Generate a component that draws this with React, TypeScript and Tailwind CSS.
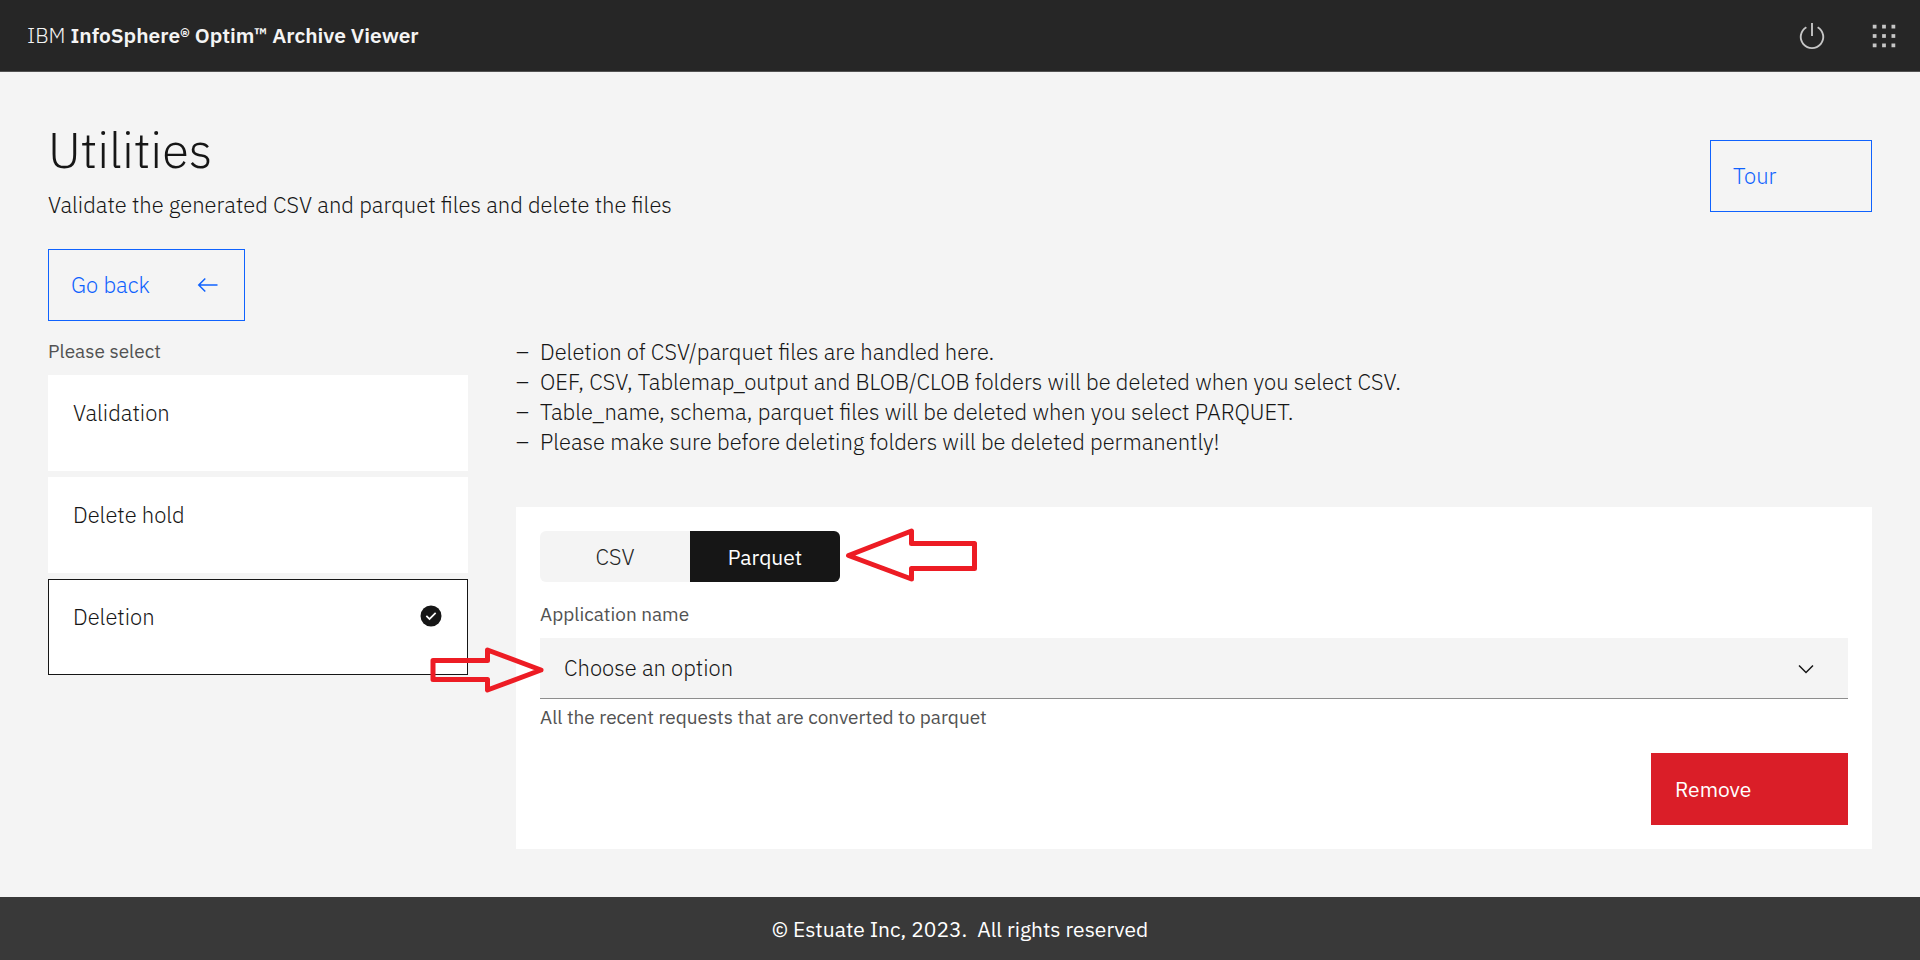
import React, { useState } from "react";

const notes = [
  "Deletion of CSV/parquet files are handled here.",
  "OEF, CSV, Tablemap_output and BLOB/CLOB folders will be deleted when you select CSV.",
  "Table_name, schema, parquet files will be deleted when you select PARQUET.",
  "Please make sure before deleting folders will be deleted permanently!",
];

const actions = ["Validation", "Delete hold", "Deletion"];
const formats = ["CSV", "Parquet"];

function PowerIcon() {
  return (
    <svg viewBox="0 0 32 32" className="size-[30px]" fill="currentColor" aria-hidden="true">
      <path d="M22.5 5.74l-1 1.73a11 11 0 1 1-11 0l-1-1.73a13 13 0 1 0 13 0Z" />
      <path d="M15 2h2v14h-2z" />
    </svg>
  );
}

function AppsIcon() {
  const stops = [4, 14, 24];
  return (
    <svg viewBox="0 0 32 32" className="size-[30px]" fill="currentColor" aria-hidden="true">
      {stops.map((y) => stops.map((x) => <rect key={`${x}-${y}`} x={x} y={y} width="4" height="4" />))}
    </svg>
  );
}

function BackArrowIcon() {
  return (
    <svg viewBox="0 0 16 16" className="size-6 shrink-0" fill="currentColor" aria-hidden="true">
      <path d="M6.500 12.700l.7-.7L3.700 8.500H15v-1H3.700L7.200 4l-.7-.7L1.800 8Z" />
    </svg>
  );
}

function CheckIcon() {
  return (
    <svg viewBox="0 0 32 32" className="size-6 shrink-0" aria-hidden="true">
      <circle cx="16" cy="16" r="14" fill="#161616" />
      <path d="M14 21.5l-5-4.96L10.59 15 14 18.35 21.41 11 23 12.58Z" fill="#fff" />
    </svg>
  );
}

function ChevronIcon() {
  return (
    <svg viewBox="0 0 16 16" className="pointer-events-none absolute top-1/2 right-[30px] size-6 -translate-y-1/2" fill="currentColor" aria-hidden="true">
      <path d="M8 11L3 6l.7-.7L8 9.6l4.3-4.3.7.7Z" />
    </svg>
  );
}

export default function App() {
  const [action, setAction] = useState("Deletion");
  const [format, setFormat] = useState("Parquet");

  return (
    <div className="flex min-h-screen flex-col bg-[#f4f4f4] font-['IBM_Plex_Sans','Noto_Sans',sans-serif] text-[22px] leading-[30px] font-light text-[#161616]">
      <header className="flex h-[72px] items-center justify-between border-b border-[#525252] bg-[#262626] pr-[21px] pl-[27px] text-[#f4f4f4]">
        <p className="pb-0.5 text-[21px]">
          IBM <span className="font-semibold">InfoSphere® Optim™ Archive Viewer</span>
        </p>
        <div className="flex gap-[42px] text-[#c6c6c6]">
          <button type="button" aria-label="Log out">
            <PowerIcon />
          </button>
          <button type="button" aria-label="App switcher">
            <AppsIcon />
          </button>
        </div>
      </header>

      <main className="flex-1 px-12 pt-12 pb-12">
        <div className="flex items-start justify-between">
          <div>
            <h1 className="text-[49px] leading-[60px]">Utilities</h1>
            <p className="mt-2.5">Validate the generated CSV and parquet files and delete the files</p>
          </div>
          <button type="button" className="mt-5 h-[72px] w-[162px] border border-[#0f62fe] px-[22px] text-left text-[#0f62fe]">
            Tour
          </button>
        </div>
        <button type="button" className="mt-[29px] flex h-[72px] w-[197px] items-center justify-between border border-[#0f62fe] pr-[25px] pl-[22px] text-[#0f62fe]">
          Go back
          <BackArrowIcon />
        </button>

        <div className="mt-4 flex items-start gap-12">
          <fieldset className="w-[420px] shrink-0">
            <legend className="pb-2.5 text-[19px] leading-7 font-normal text-[#525252]">Please select</legend>
            <div className="flex flex-col gap-1.5">
              {actions.map((name) => (
                <label
                  key={name}
                  className="flex h-24 cursor-pointer items-start justify-between border border-white bg-white p-6 leading-[26px] has-checked:border-[#161616]"
                >
                  <input
                    type="radio"
                    name="action"
                    className="sr-only"
                    checked={action === name}
                    onChange={() => setAction(name)}
                  />
                  {name}
                  {action === name && <CheckIcon />}
                </label>
              ))}
            </div>
          </fieldset>

          <div className="min-w-0 flex-1">
            <ul>
              {notes.map((note) => (
                <li key={note} className="flex before:w-6 before:shrink-0 before:content-['–']">
                  {note}
                </li>
              ))}
            </ul>

            <section className="relative mt-[50px] bg-white p-6">
              <div role="tablist" className="flex h-[51px] w-[300px] overflow-hidden rounded-md bg-[#f4f4f4]">
                {formats.map((name) => (
                  <button
                    key={name}
                    type="button"
                    role="tab"
                    aria-selected={format === name}
                    onClick={() => setFormat(name)}
                    className="flex-1 text-[#262626] aria-selected:bg-[#161616] aria-selected:text-[21px] aria-selected:font-normal aria-selected:text-white"
                  >
                    {name}
                  </button>
                ))}
              </div>

              <label htmlFor="application" className="mt-[18px] block text-[19px] leading-7 font-normal text-[#525252]">
                Application name
              </label>
              <div className="relative mt-2.5">
                <select
                  id="application"
                  className="block h-[61px] w-full appearance-none border-b border-[#8d8d8d] bg-[#f4f4f4] px-6"
                >
                  <option>Choose an option</option>
                </select>
                <ChevronIcon />
              </div>
              <p className="mt-1 text-[19px] leading-7 font-normal text-[#525252]">
                All the recent requests that are converted to parquet
              </p>

              <button
                type="button"
                className="mt-[22px] ml-auto block h-[72px] w-[197px] bg-[#da1e28] px-6 text-left text-[21px] font-normal text-white"
              >
                Remove
              </button>

              <svg
                viewBox="0 0 134 54"
                className="pointer-events-none absolute top-[21px] left-[330px] h-[54px] w-[134px]"
                fill="none"
                stroke="#ed1c24"
                strokeWidth="5"
                strokeLinejoin="round"
                aria-hidden="true"
              >
                <path d="M2.500 27.500L65.500 3v12.500h63v25h-63V51Z" />
              </svg>
              <svg
                viewBox="0 0 116 46"
                className="pointer-events-none absolute top-[140px] left-[-86px] h-[46px] w-[116px]"
                fill="none"
                stroke="#ed1c24"
                strokeWidth="5"
                strokeLinejoin="round"
                aria-hidden="true"
              >
                <path d="M3 13.500h54.500V3l53.500 20-53.500 20V32.500H3Z" />
              </svg>
            </section>
          </div>
        </div>
      </main>

      <footer className="flex h-[63px] items-center justify-center bg-[#393939] text-[21px] font-normal text-white">
        © Estuate Inc, 2023.{"\u00a0 "}All rights reserved
      </footer>
    </div>
  );
}
